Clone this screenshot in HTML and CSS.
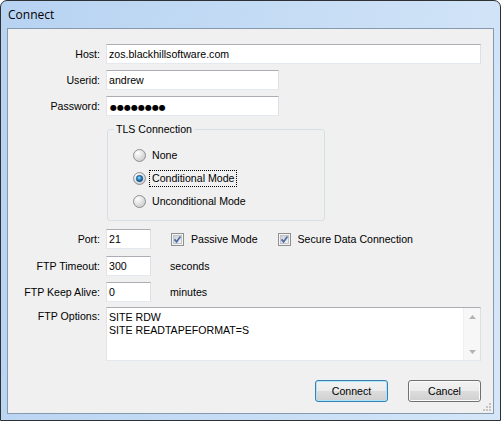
FILE: index.html
```html
<!DOCTYPE html>
<html lang="en">
<head>
    <meta charset="UTF-8">
    <title>Connect</title>
    <link rel="stylesheet" href="styles.css">
</head>
<body>

    <!-- shared gradients for the radio and check glyphs -->
    <svg class="defs" width="0" height="0">
        <defs>
            <linearGradient id="boxFill" x1="0" y1="0" x2="1" y2="1">
                <stop offset="0" stop-color="#c9ccd1"/>
                <stop offset="1" stop-color="#f7f7f7"/>
            </linearGradient>
            <radialGradient id="radioFill" cx="0.35" cy="0.3" r="0.8">
                <stop offset="0" stop-color="#ffffff"/>
                <stop offset="1" stop-color="#c6c7c9"/>
            </radialGradient>
            <radialGradient id="radioDot" cx="0.45" cy="0.4" r="0.6">
                <stop offset="0" stop-color="#a6ecff"/>
                <stop offset="0.45" stop-color="#2d8fd6"/>
                <stop offset="1" stop-color="#0f3f78"/>
            </radialGradient>
        </defs>
    </svg>

    <div class="window">
        <div class="titlebar">Connect</div>

        <div class="client">
            <div class="row r-host">
                <label class="lbl">Host:</label>
                <div class="field f-host">zos.blackhillsoftware.com</div>
            </div>
            <div class="row r-user">
                <label class="lbl">Userid:</label>
                <div class="field f-user">andrew</div>
            </div>
            <div class="row r-pass">
                <label class="lbl">Password:</label>
                <div class="field f-user"><span class="dots">●●●●●●●●</span></div>
            </div>

            <!-- TLS group -->
            <div class="group-row">
                <fieldset class="group">
                    <legend>TLS Connection</legend>
                    <div class="radio-row">
                        <svg class="radio" width="13" height="13" viewBox="0 0 13 13">
                            <circle cx="6.5" cy="6.5" r="6" fill="url(#radioFill)" stroke="#8f9091"/>
                        </svg>
                        <span class="opt">None</span>
                    </div>
                    <div class="radio-row">
                        <svg class="radio" width="13" height="13" viewBox="0 0 13 13">
                            <circle cx="6.5" cy="6.5" r="6" fill="url(#radioFill)" stroke="#8f9091"/>
                            <circle cx="6.5" cy="6.5" r="3.2" fill="url(#radioDot)" stroke="#1d4f86" stroke-width="0.6"/>
                        </svg>
                        <span class="opt focus">Conditional Mode</span>
                    </div>
                    <div class="radio-row">
                        <svg class="radio" width="13" height="13" viewBox="0 0 13 13">
                            <circle cx="6.5" cy="6.5" r="6" fill="url(#radioFill)" stroke="#8f9091"/>
                        </svg>
                        <span class="opt">Unconditional Mode</span>
                    </div>
                </fieldset>
            </div>

            <div class="row r-port">
                <label class="lbl">Port:</label>
                <div class="field f-short">21</div>
                <svg class="check c-first" width="13" height="13" viewBox="0 0 13 13">
                    <rect x="0.5" y="0.5" width="12" height="12" fill="#f4f4f4" stroke="#8f9091"/>
                    <rect x="2.5" y="2.5" width="8" height="8" fill="url(#boxFill)" stroke="#c3c4c6"/>
                    <path d="M3.6 6.4 L5.6 8.9 L9.4 3.6" fill="none" stroke="#4d6aa8" stroke-width="1.7"/>
                </svg>
                <span class="chk-lbl">Passive Mode</span>
                <svg class="check c-second" width="13" height="13" viewBox="0 0 13 13">
                    <rect x="0.5" y="0.5" width="12" height="12" fill="#f4f4f4" stroke="#8f9091"/>
                    <rect x="2.5" y="2.5" width="8" height="8" fill="url(#boxFill)" stroke="#c3c4c6"/>
                    <path d="M3.6 6.4 L5.6 8.9 L9.4 3.6" fill="none" stroke="#4d6aa8" stroke-width="1.7"/>
                </svg>
                <span class="chk-lbl">Secure Data Connection</span>
            </div>
            <div class="row r-timeout">
                <label class="lbl">FTP Timeout:</label>
                <div class="field f-short">300</div>
                <span class="unit">seconds</span>
            </div>
            <div class="row r-alive">
                <label class="lbl">FTP Keep Alive:</label>
                <div class="field f-short">0</div>
                <span class="unit">minutes</span>
            </div>
            <div class="row r-options">
                <label class="lbl lbl-top">FTP Options:</label>
                <div class="field f-options">
                    <div class="options-text">SITE RDW<br>SITE READTAPEFORMAT=S</div>
                    <div class="vscroll">
                        <svg width="7" height="4" viewBox="0 0 7 4"><path d="M0 4 L3.5 0 L7 4 Z" fill="#b4b4b4"/></svg>
                        <svg width="7" height="4" viewBox="0 0 7 4"><path d="M0 0 L3.5 4 L7 0 Z" fill="#b4b4b4"/></svg>
                    </div>
                </div>
            </div>

            <div class="actions">
                <button class="btn btn-default">Connect</button>
                <button class="btn">Cancel</button>
            </div>

            <!-- resize grip in the corner -->
            <svg class="grip" width="9" height="9" viewBox="0 0 9 9">
                <rect x="7" y="1" width="2" height="2" fill="#c4c4c4"/>
                <rect x="4" y="4" width="2" height="2" fill="#c4c4c4"/>
                <rect x="7" y="4" width="2" height="2" fill="#c4c4c4"/>
                <rect x="1" y="7" width="2" height="2" fill="#c4c4c4"/>
                <rect x="4" y="7" width="2" height="2" fill="#c4c4c4"/>
                <rect x="7" y="7" width="2" height="2" fill="#c4c4c4"/>
            </svg>
        </div>
    </div>

</body>
</html>
```

FILE: styles.css
```css
/* base */
* {
    box-sizing: border-box;
}

body {
    margin: 0;
    font-family: "Liberation Sans", Arial, sans-serif;
    font-size: 10.6px;
    color: #000;
    background: #fff;
}

.defs {
    display: block;
    width: 0;
    height: 0;
}

/* window frame */
.window {
    width: 501px;
    height: 421px;
    border: 1px solid #2f3033;
    border-radius: 7px 7px 0 0;
    background: linear-gradient(100deg, #b7d3f2 0%, #c2daf4 40%, #d5e6f8 100%);
    display: flex;
    flex-direction: column;
}

.titlebar {
    height: 27px;
    padding-left: 7px;
    font-family: "Open Sans", "Noto Sans", sans-serif;
    font-size: 12px;
    line-height: 27px;
}

.client {
    position: relative;
    flex: 1;
    margin: 0 6px 6px 6px;
    border: 1px solid #8799ae;
    background: #f0f0f0;
    display: flex;
    flex-direction: column;
}

/* form rows */
.row {
    display: flex;
    align-items: center;
}

.lbl {
    flex: none;
    width: 92px;
    margin-right: 6px;
    text-align: right;
}

.lbl-top {
    align-self: flex-start;
    padding-top: 3px;
}

.field {
    flex: none;
    height: 20px;
    padding: 0 2px;
    line-height: 18px;
    background: #fff;
    border: 1px solid;
    border-color: #abadb3 #dbdfe6 #e3e9ef #e2e3ea;
    white-space: nowrap;
}

.f-host { width: 375px; }
.f-user { width: 173px; }
.f-short { width: 45px; }

.dots {
    font-family: "DejaVu Sans", sans-serif;
    font-size: 8px;
    letter-spacing: 0;
    padding-left: 1px;
}

.r-host { margin-top: 15px; }
.r-user, .r-pass { margin-top: 6px; }

/* TLS group box */
.group-row {
    padding-left: 99px;
    margin-top: 6px;
}

.group {
    width: 218px;
    height: 99px;
    margin: 0;
    padding: 0 0 0 6px;
    border: 1px solid #d5dfe5;
    border-radius: 3px;
}

.group legend {
    padding: 0 2px;
    line-height: 14px;
}

.radio-row {
    display: flex;
    align-items: center;
    height: 23px;
    margin-left: 19px;
}

.radio-row:first-of-type {
    margin-top: 8px;
}

.radio {
    flex: none;
    margin-right: 3px;
}

.opt {
    padding: 1px 2px;
    border: 1px solid transparent;
    line-height: 13px;
}

.opt.focus {
    border: 1px dotted #000;
}

/* port / timeouts */
.r-port { margin-top: 8px; }
.r-timeout { margin-top: 7px; }
.r-alive { margin-top: 6px; }

.check {
    flex: none;
    margin-right: 7px;
}

.c-first { margin-left: 20px; }
.c-second { margin-left: 20px; }

.unit {
    margin-left: 19px;
}

/* options box */
.r-options { margin-top: 5px; }

.f-options {
    width: 375px;
    height: 54px;
    padding: 0;
    display: flex;
}

.options-text {
    flex: 1;
    padding: 3px 0 0 2px;
    line-height: 13px;
}

.vscroll {
    flex: none;
    width: 17px;
    height: 100%;
    background: #f7f7f7;
    border-left: 1px solid #efefef;
    display: flex;
    flex-direction: column;
    justify-content: space-between;
    align-items: center;
    padding: 7px 0 6px;
}

.vscroll svg {
    display: block;
}

/* dialog buttons */
.actions {
    display: flex;
    justify-content: flex-end;
    gap: 20px;
    margin-top: 19px;
    padding-right: 12px;
}

.btn {
    width: 73px;
    height: 22px;
    padding: 0;
    font: inherit;
    color: #000;
    border: 1px solid #707070;
    border-radius: 3px;
    background: linear-gradient(#f2f2f2 0%, #ebebeb 50%, #dddddd 50%, #cfcfcf 100%);
    box-shadow: inset 0 0 0 1px #fbfbfb;
}

.btn-default {
    border-color: #3c7fb1;
    box-shadow: inset 0 0 0 1px #a8e4fa;
}

.grip {
    position: absolute;
    right: 2px;
    bottom: 2px;
}
```
